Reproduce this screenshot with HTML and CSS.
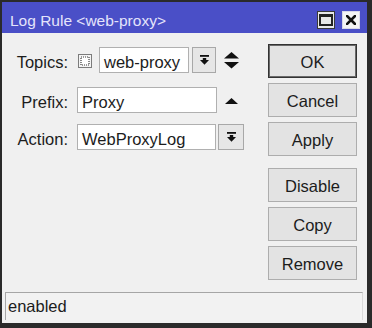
FILE: index.html
```html
<!DOCTYPE html>
<html>
<head>
<meta charset="utf-8">
<link rel="stylesheet" href="styles.css">
</head>
<body>
<div class="window">
  <div class="titlebar">
    <span class="title">Log Rule &lt;web-proxy&gt;</span>
    <div class="tbtns">
      <span class="tbtn"><svg width="14" height="12" viewBox="0 0 14 12"><rect x="1" y="1" width="12" height="10" fill="none" stroke="#222" stroke-width="2"/><rect x="1" y="1" width="12" height="2" fill="#222"/></svg></span>
      <span class="tbtn close"><svg width="10" height="10" viewBox="0 0 10 10"><path d="M1 1L9 9M9 1L1 9" stroke="#111" stroke-width="2.6" stroke-linecap="square"/></svg></span>
    </div>
  </div>
  <div class="content">
    <div class="form">
      <div class="row">
        <span class="label">Topics:</span>
        <span class="check"><svg width="14" height="14" viewBox="0 0 14 14"><rect x="0.5" y="0.5" width="13" height="13" fill="#f4f4f4" stroke="#7c7c7c"/><rect x="3" y="3" width="8" height="8" fill="#fff" stroke="#3a3a3a" stroke-width="1.2" stroke-dasharray="1 1"/></svg></span>
        <span class="input w-topics">web-proxy</span>
        <span class="dd"><svg width="9" height="10" viewBox="0 0 9 10"><rect x="0" y="0" width="9" height="1.8" fill="#111"/><rect x="2.8" y="3" width="3.4" height="2.5" fill="#111"/><polygon points="0,5 9,5 4.5,9.8" fill="#111"/></svg></span>
        <span class="updown"><svg width="15" height="17" viewBox="0 0 15 17"><polygon points="7.5,0 15,6.5 0,6.5" fill="#111"/><polygon points="0,10 15,10 7.5,16.5" fill="#111"/></svg></span>
      </div>
      <div class="row r-prefix">
        <span class="label">Prefix:</span>
        <span class="input w-prefix">Proxy</span>
        <span class="up"><svg width="13" height="6" viewBox="0 0 13 6"><polygon points="6.5,0 13,6 0,6" fill="#111"/></svg></span>
      </div>
      <div class="row r-action">
        <span class="label">Action:</span>
        <span class="input w-action">WebProxyLog</span>
        <span class="dd dd-action"><svg width="9" height="10" viewBox="0 0 9 10"><rect x="0" y="0" width="9" height="1.8" fill="#111"/><rect x="2.8" y="3" width="3.4" height="2.5" fill="#111"/><polygon points="0,5 9,5 4.5,9.8" fill="#111"/></svg></span>
      </div>
    </div>
    <div class="buttons">
      <span class="btn default">OK</span>
      <span class="btn">Cancel</span>
      <span class="btn">Apply</span>
      <span class="btn group">Disable</span>
      <span class="btn">Copy</span>
      <span class="btn">Remove</span>
    </div>
  </div>
  <div class="status">
    <div class="statusbox">enabled</div>
  </div>
</div>
</body>
</html>
```
FILE: styles.css
```css
html, body {
  margin: 0;
  padding: 0;
  background: #2a2a2a;
}
body {
  font-family: "Liberation Sans", Arial, sans-serif;
  font-size: 16.5px;
  color: #1c1c1c;
}
.window {
  width: 372px;
  height: 328px;
  box-sizing: border-box;
  border-style: solid;
  border-color: #2a2a2a;
  border-width: 2px 5px 5px 2px;
  background: #f0f0f0;
  display: flex;
  flex-direction: column;
}
.titlebar {
  height: 31px;
  flex: none;
  background: #4a4fc7;
  display: flex;
  align-items: flex-start;
  justify-content: space-between;
  padding: 0 7px 0 8px;
}
.title {
  margin-top: 10px;
  line-height: 17px;
  font-size: 15.5px;
  color: #e4e4fb;
}
.tbtns {
  display: flex;
  gap: 7px;
  margin-top: 9px;
}
.tbtn {
  width: 18px;
  height: 18px;
  box-sizing: border-box;
  background: #e8e8e8;
  border: 1px solid #3a3a3a;
  display: flex;
  align-items: center;
  justify-content: center;
}
.tbtn.close {
  background: #f4f4f4;
  border-color: #d8d8e8;
}
.content {
  flex: 1;
  display: flex;
}
.form {
  flex: 1;
  padding-top: 14px;
}
.row {
  display: flex;
  align-items: center;
  height: 26px;
}
.r-prefix { margin-top: 14px; }
.r-action { margin-top: 11px; }
.label {
  width: 66px;
  text-align: right;
  margin-right: 9px;
  padding-top: 4px;
  line-height: 22px;
}
.check {
  display: flex;
  margin-left: 1px;
  margin-right: 7px;
  padding-top: 1px;
}
.input {
  box-sizing: border-box;
  height: 26px;
  background: #fff;
  border: 1px solid #b0b0b0;
  padding-left: 4px;
  padding-top: 3px;
  line-height: 22px;
  white-space: nowrap;
  overflow: hidden;
}
.w-topics { width: 90px; }
.w-prefix { width: 140px; }
.w-action { width: 139px; }
.dd {
  box-sizing: border-box;
  width: 24px;
  height: 26px;
  margin-left: 3px;
  background: #e6e6e6;
  border: 1px solid #a8a8a8;
  display: flex;
  align-items: center;
  justify-content: center;
}
.dd-action {
  width: 26px;
  margin-left: 2px;
}
.updown {
  display: flex;
  margin-left: 8px;
}
.up {
  display: flex;
  margin-left: 8px;
  padding-top: 2px;
}
.buttons {
  width: 89px;
  margin-right: 10px;
  padding-top: 11px;
  display: flex;
  flex-direction: column;
  gap: 5px;
}
.btn {
  box-sizing: border-box;
  height: 34px;
  background: #e3e3e3;
  border: 1px solid #adadad;
  display: flex;
  align-items: center;
  justify-content: center;
  padding-top: 2px;
}
.btn.default {
  border: 1px solid #333;
  box-shadow: inset 0 0 0 1px #6a6a6a;
}
.btn.group {
  margin-top: 7px;
}
.status {
  height: 31px;
  flex: none;
  box-sizing: border-box;
  padding: 0 4px 3px 3px;
}
.statusbox {
  height: 28px;
  box-sizing: border-box;
  border-top: 1px solid #a6a6a6;
  border-left: 1px solid #a6a6a6;
  border-right: 1px solid #d8d8d8;
  background: #f2f2f2;
  padding-left: 2px;
  line-height: 27px;
}
```
